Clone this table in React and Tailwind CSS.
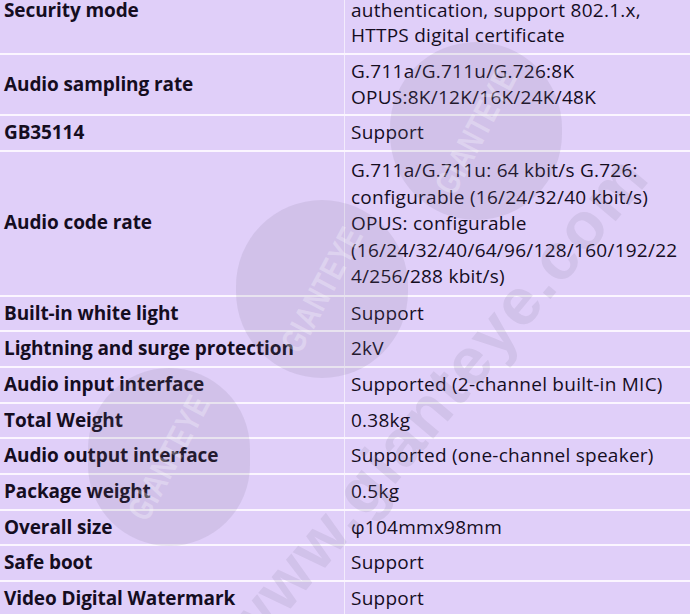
import React from "react";

const rows = [
  {
    k: "Security mode",
    v: ["Password protection, complex password, user", "authentication, support 802.1.x,", "HTTPS digital certificate"],
  },
  { k: "Audio sampling rate", v: ["G.711a/G.711u/G.726:8K", "OPUS:8K/12K/16K/24K/48K"] },
  { k: "GB35114", v: ["Support"] },
  {
    k: "Audio code rate",
    v: [
      "G.711a/G.711u: 64 kbit/s G.726:",
      "configurable (16/24/32/40 kbit/s)",
      "OPUS: configurable",
      "(16/24/32/40/64/96/128/160/192/22",
      "4/256/288 kbit/s)",
    ],
    tall: true,
  },
  { k: "Built-in white light", v: ["Support"] },
  { k: "Lightning and surge protection", v: ["2kV"] },
  { k: "Audio input interface", v: ["Supported (2-channel built-in MIC)"] },
  { k: "Total Weight", v: ["0.38kg"] },
  { k: "Audio output interface", v: ["Supported (one-channel speaker)"] },
  { k: "Package weight", v: ["0.5kg"] },
  { k: "Overall size", v: ["φ104mmx98mm"] },
  { k: "Safe boot", v: ["Support"] },
  { k: "Video Digital Watermark", v: ["Support"] },
];

function Logo({ className }) {
  return (
    <div className={"absolute flex items-center justify-center rounded-full bg-[rgba(120,110,140,0.14)] " + className}>
      <span className="-rotate-[62deg] scale-x-75 text-[34px] font-bold tracking-[1px] text-[rgba(255,255,255,0.28)] [font-family:'Liberation_Sans',sans-serif]">
        GIANTEYE
      </span>
    </div>
  );
}

export default function App() {
  return (
    <div className="relative h-[614px] w-[690px] overflow-hidden bg-[#e0cff9] text-[19px] text-[#150d1f] [font-family:'Open_Sans',sans-serif]">
      <div className="-mt-[32px] flex flex-col">
        {rows.map((r, i) => (
          <div key={i} className="grid grid-cols-[345px_1fr] border-b-2 border-[#fbf6ff]">
            <div className="flex items-center border-r border-[#f3ecfd] pl-[4px] font-bold leading-[25.67px] tracking-[-0.1px]">
              {r.k}
            </div>
            <div
              className={
                "whitespace-nowrap pl-[6px] tracking-[0.25px] " +
                (r.tall ? "py-[5px] leading-[26.5px]" : "py-[4px] leading-[25.67px]")
              }
            >
              {r.v.map((line, j) => (
                <div key={j}>{line}</div>
              ))}
            </div>
          </div>
        ))}
      </div>

      <div className="pointer-events-none absolute inset-0">
        <Logo className="left-[390px] top-[42px] h-[178px] w-[172px]" />
        <Logo className="left-[236px] top-[200px] h-[178px] w-[172px]" />
        <Logo className="left-[88px] top-[368px] h-[178px] w-[162px]" />
        <div className="absolute left-[130px] top-[370px] w-[580px] origin-center -rotate-[50deg] whitespace-nowrap text-[66px] font-bold tracking-[2px] text-[rgba(130,120,150,0.15)] [font-family:'Liberation_Sans',sans-serif]">
          www.gianteye.com
        </div>
      </div>
    </div>
  );
}
